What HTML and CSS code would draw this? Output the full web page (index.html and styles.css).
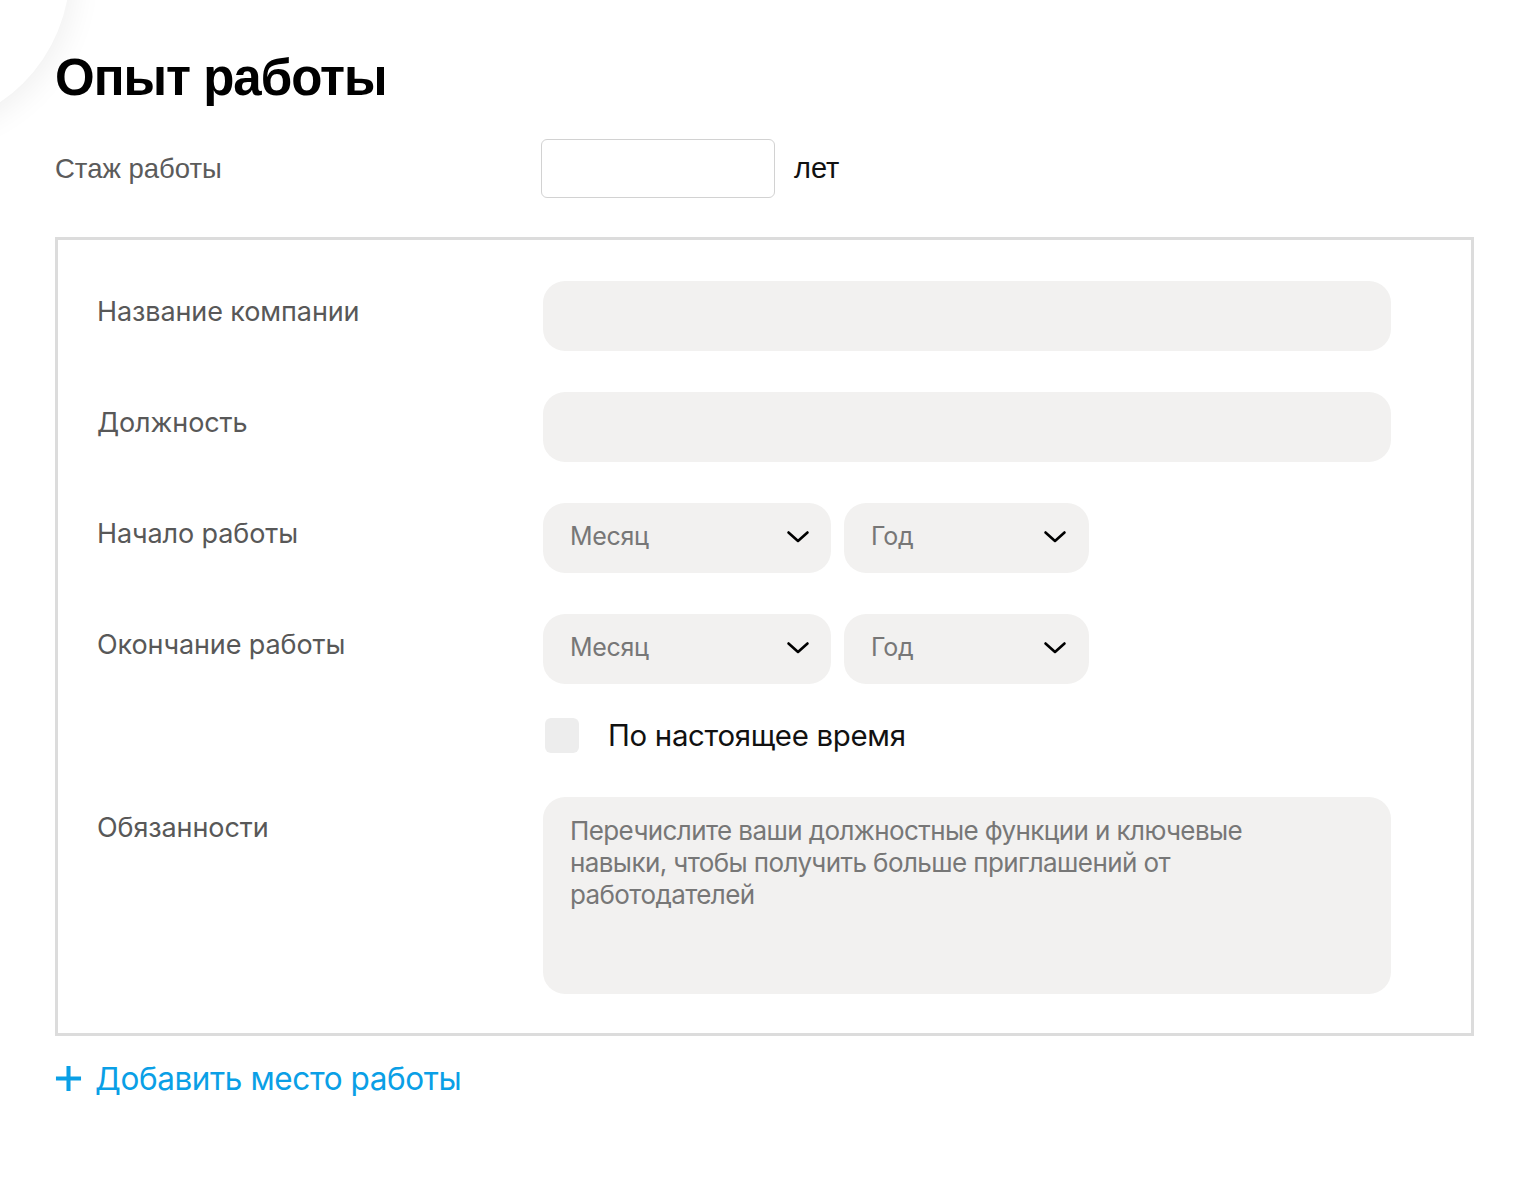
FILE: index.html
```html
<!DOCTYPE html>
<html lang="ru">
<head>
<meta charset="utf-8">
<title>Опыт работы</title>
<link rel="stylesheet" href="styles.css">
</head>
<body>
<div class="corner"></div>
<main class="page">
  <h1 class="title">Опыт работы</h1>
  <div class="exp-row">
    <span class="exp-label">Стаж работы</span>
    <input class="exp-input" type="text">
    <span class="exp-unit">лет</span>
  </div>
  <section class="job">
    <div class="row">
      <div class="label">Название компании</div>
      <div class="field"><input class="input" type="text"></div>
    </div>
    <div class="row">
      <div class="label">Должность</div>
      <div class="field"><input class="input" type="text"></div>
    </div>
    <div class="row">
      <div class="label">Начало работы</div>
      <div class="field selects">
        <div class="select month"><span>Месяц</span><svg class="chev" viewBox="0 0 22 12"><path d="M1.5 1.5 L11 10 L20.5 1.5"/></svg></div>
        <div class="select year"><span>Год</span><svg class="chev" viewBox="0 0 22 12"><path d="M1.5 1.5 L11 10 L20.5 1.5"/></svg></div>
      </div>
    </div>
    <div class="row">
      <div class="label">Окончание работы</div>
      <div class="field selects">
        <div class="select month"><span>Месяц</span><svg class="chev" viewBox="0 0 22 12"><path d="M1.5 1.5 L11 10 L20.5 1.5"/></svg></div>
        <div class="select year"><span>Год</span><svg class="chev" viewBox="0 0 22 12"><path d="M1.5 1.5 L11 10 L20.5 1.5"/></svg></div>
      </div>
    </div>
    <div class="row check-row">
      <div class="label"></div>
      <label class="check"><span class="box"></span><span class="check-text">По настоящее время</span></label>
    </div>
    <div class="row">
      <div class="label">Обязанности</div>
      <div class="field"><div class="textarea">Перечислите ваши должностные функции и ключевые навыки, чтобы получить больше приглашений от работодателей</div></div>
    </div>
  </section>
  <a class="add" href="#"><svg class="plus" viewBox="0 0 28 28"><path d="M14 1 V27 M1 14 H27"/></svg><span>Добавить место работы</span></a>
</main>
</body>
</html>
```
FILE: styles.css
```css
* { box-sizing: border-box; }
html, body { margin: 0; padding: 0; background: #fff; }
body { font-family: "Liberation Sans", Arial, sans-serif; color: #000; overflow: hidden; }

.corner {
  position: absolute;
  left: -250px;
  top: -190px;
  width: 320px;
  height: 320px;
  border-radius: 50%;
  background: #fff;
  box-shadow: 6px 6px 30px rgba(0,0,0,0.06);
}

.page { padding: 52px 46px 0 55px; position: relative; }

.title {
  margin: 0;
  font-size: 51px;
  line-height: 52px;
  font-weight: 700;
  letter-spacing: -1px;
}

.exp-row {
  display: flex;
  align-items: center;
  margin-top: 35px;
  height: 59px;
}
.exp-label { width: 486px; font-size: 27.5px; color: #5b5b5b; }
.exp-input {
  width: 234px;
  height: 59px;
  border: 1.5px solid #d2d2d2;
  border-radius: 6px;
  background: #fff;
  outline: none;
}
.exp-unit { margin-left: 19px; font-size: 29px; color: #111; }

.job {
  margin-top: 39px;
  width: 1419px;
  border: 3px solid #dcdcdc;
  padding: 41px 80px 39px 39px;
  display: flex;
  flex-direction: column;
  gap: 41px;
}

.row { display: flex; align-items: flex-start; }
.label {
  width: 446px;
  flex: none;
  padding-top: 15px;
  font-family: Inter, "Noto Sans", sans-serif;
  font-size: 27px;
  line-height: 32px;
  color: #585858;
  letter-spacing: -0.1px;
}
.field { flex: 1; }
.input {
  display: block;
  width: 100%;
  height: 70px;
  border: none;
  border-radius: 22px;
  background: #f2f1f0;
  outline: none;
}

.selects { display: flex; gap: 13px; }
.select {
  height: 70px;
  border-radius: 22px;
  background: #f2f1f0;
  display: flex;
  align-items: center;
  justify-content: space-between;
  padding: 0 22px 0 27px;
  font-family: Inter, "Noto Sans", sans-serif;
  font-size: 25px;
  color: #777;
  letter-spacing: -0.3px;
}
.select span { margin-top: -4px; }
.select.month { width: 288px; }
.select.year { width: 245px; padding-right: 23px; }
.chev { width: 22px; height: 12px; overflow: visible; margin-top: -3px; }
.chev path { fill: none; stroke: #000; stroke-width: 2.6; stroke-linecap: round; stroke-linejoin: round; }

.check-row { margin-top: -7px; margin-bottom: 3px; }
.check { display: flex; align-items: center; gap: 29px; margin-left: 2px; }
.box {
  width: 34px;
  height: 35px;
  border-radius: 6px;
  background: #ededed;
  flex: none;
}
.check-text {
  font-family: Inter, "Noto Sans", sans-serif;
  font-size: 29.4px;
  color: #111;
  letter-spacing: -0.3px;
}

.textarea {
  height: 197px;
  border-radius: 22px;
  background: #f2f1f0;
  padding: 18px 120px 0 27px;
  font-family: Inter, "Noto Sans", sans-serif;
  font-size: 26px;
  line-height: 32px;
  color: #777;
  letter-spacing: -0.6px;
}

.add {
  display: inline-flex;
  align-items: center;
  gap: 13px;
  margin-top: 23px;
  text-decoration: none;
  color: #0a9fe6;
  font-family: Inter, "Noto Sans", sans-serif;
  font-size: 31.5px;
  letter-spacing: -0.4px;
}
.plus { width: 27px; height: 27px; }
.plus path { stroke: #0a9fe6; stroke-width: 4.2; fill: none; }
```
